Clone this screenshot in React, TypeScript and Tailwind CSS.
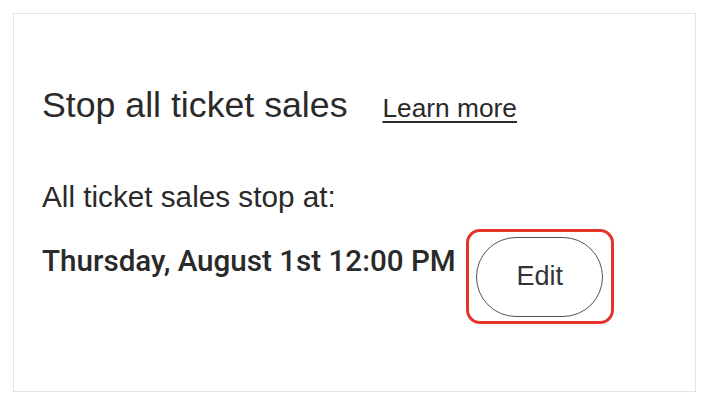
export default function App() {
	return (
		<div className="w-[714px] h-[408px] bg-white pt-[13px] pl-[13px]" style={{fontFamily: '"Liberation Sans", Arial, sans-serif'}}>
			<div className="w-[683px] h-[379px] border border-[#e3e3e3] bg-white pl-[28px] pt-[71px] text-[#2a2a2a]">
				<div className="flex items-baseline gap-[35px]">
					<h2 className="text-[35.7px] leading-[40px]">Stop all ticket sales</h2>
					<a href="#" className="text-[26.3px] leading-[30px] underline underline-offset-[4px] decoration-[1.5px]">Learn more</a>
				</div>
				<p className="mt-[54px] text-[29.7px] leading-[36px]">All ticket sales stop at:</p>
				<div className="flex items-start mt-[14px]">
					<p className="mt-[14px] text-[29.6px] leading-[36px] font-medium" style={{fontFamily: 'Roboto, "Liberation Sans", sans-serif'}}>Thursday, August 1st 12:00 PM</p>
					<div className="ml-[10px] w-[148px] h-[95px] rounded-[14px] border-[3px] border-[#e4352b] flex items-center justify-center">
						<button className="w-[127px] h-[80px] rounded-full border border-[#555] text-[27px] text-[#333]">Edit</button>
					</div>
				</div>
			</div>
		</div>
	);
}
